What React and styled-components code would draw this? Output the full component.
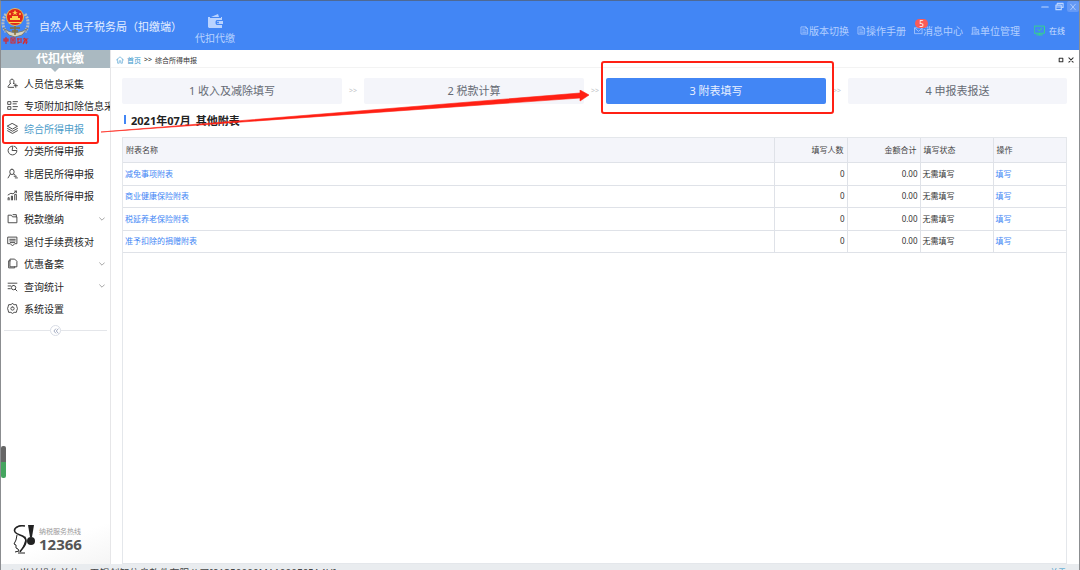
import React, { useState } from 'react';
import styled, { createGlobalStyle, css } from 'styled-components';

const GlobalStyle = createGlobalStyle`
  * {
    box-sizing: border-box;
  }

  body {
    margin: 0;
    overflow: hidden;
    background: #fff;
    color: #333;
    font-family: 'Noto Sans', 'Noto Sans CJK SC', sans-serif;
    font-size: 8px;
  }

  button {
    margin: 0;
    padding: 0;
    border: 0;
    background: none;
    color: inherit;
    font: inherit;
    cursor: pointer;
  }

  a {
    color: inherit;
    text-decoration: none;
  }

  svg {
    display: block;
    flex: none;
  }
`;

const Window = styled.div`
  position: relative;
  display: flex;
  flex-direction: column;
  height: 100vh;
  border: 1px solid #8b8d90;
  border-top-color: #4e6994;
  border-bottom: 0;
`;

const Header = styled.header`
  display: flex;
  flex: none;
  height: 49px;
  background: #4286f5;
  color: #fff;
`;

const Brand = styled.div`
  display: flex;
  align-items: center;
  gap: 9px;
  color: #e4eeff;
  font-size: 11px;
  white-space: nowrap;
`;

const ModuleButton = styled.button`
  display: flex;
  flex-direction: column;
  align-items: center;
  justify-content: center;
  gap: 3px;
  margin-left: 13px;
  padding-top: 8px;
  color: #b9d3ff;
  font-size: 10px;
  line-height: 14px;
`;

const HeaderRight = styled.div`
  display: flex;
  flex-direction: column;
  align-items: flex-end;
  margin-left: auto;
`;

const WindowControls = styled.div`
  display: flex;
  gap: 2px;
  color: #bdd6ff;
`;

const WindowButton = styled.button`
  display: grid;
  place-items: center;
  width: 12px;
  height: 11px;
  border-radius: 2px;
  background: ${props => (props.$filled ? '#6499f5' : 'none')};
`;

const Utilities = styled.nav`
  display: flex;
  align-items: center;
  gap: 8px;
  height: 36px;
  padding-right: 14px;
`;

const UtilityLink = styled.a`
  position: relative;
  display: flex;
  align-items: center;
  color: #b3cfff;
  font-size: 10px;
  white-space: nowrap;
`;

const Badge = styled.span`
  position: absolute;
  top: -4px;
  left: 1px;
  width: 13px;
  height: 9px;
  border-radius: 5px;
  background: #fb5b57;
  color: #fff;
  font-size: 8px;
  line-height: 9px;
  text-align: center;
`;

const Online = styled.span`
  display: flex;
  align-items: center;
  gap: 4px;
  margin-left: 6px;
  color: #cfe0ff;
  font-size: 8px;
`;

const Body = styled.div`
  display: flex;
  flex: 1;
  min-height: 0;
`;

const Sidebar = styled.aside`
  position: relative;
  display: flex;
  flex: none;
  flex-direction: column;
  width: 110px;
  border-right: 1px solid #e6e6e8;
`;

const SidebarTitle = styled.h2`
  position: relative;
  margin: 0 0 4px;
  padding-left: 9px;
  background: #aab9c1;
  color: #fff;
  font-size: 12px;
  line-height: 18px;
  text-align: center;

  &::after {
    content: '';
    position: absolute;
    top: 100%;
    left: 46%;
    border: 4px solid transparent;
    border-top-color: #aab9c1;
    border-bottom: 0;
  }
`;

const Menu = styled.nav`
  display: grid;
  grid-auto-rows: 1fr;
  height: 248px;
`;

const marked = css`
  &::after {
    content: '';
    position: absolute;
    z-index: 2;
    border: 2px solid #ff2014;
    border-radius: 3px;
    pointer-events: none;
  }
`;

const MenuItem = styled.a`
  position: relative;
  display: flex;
  align-items: center;
  gap: 6px;
  min-width: 0;
  padding: 0 5px 0 6px;
  color: ${props => (props.$active ? '#4b9cc9' : '#262626')};
  font-size: 10px;
  white-space: nowrap;

  > span {
    flex: 1;
  }

  ${props => props.$active && marked}

  &::after {
    inset: -3px 11px -4px 1px;
  }
`;

const MenuText = styled.span`
  overflow: hidden;
  margin-right: ${props => (props.$wide ? '-5px' : '0')};
`;

const Collapse = styled.div`
  display: flex;
  align-items: center;
  margin: 5px 3px 0;

  &::before,
  &::after {
    content: '';
    flex: 1;
    border-top: 1px solid #e4e6ea;
  }

  button {
    display: grid;
    place-items: center;
    width: 11px;
    height: 11px;
    border: 1px solid #d9dde6;
    border-radius: 50%;
    color: #8792ad;
  }
`;

const SpeedBar = styled.div`
  position: absolute;
  bottom: 86px;
  left: 0;
  width: 5px;
  height: 32px;
  border-radius: 2px;
  background: linear-gradient(#666 50%, #45a55f 50%);
`;

const Hotline = styled.div`
  position: relative;
  display: flex;
  align-items: center;
  gap: 3px;
  height: 54px;
  margin-top: auto;
  padding: 4px 0 0 12px;
  background: linear-gradient(160deg, #fff 55%, #f5f5f5);
`;

const HotlineText = styled.div`
  color: #999;
  font-size: 7px;
  line-height: 10px;

  strong {
    display: block;
    color: #555;
    font-size: 15px;
    line-height: 15px;
  }
`;

const Main = styled.main`
  display: flex;
  flex: 1;
  flex-direction: column;
  min-width: 0;
`;

const Breadcrumb = styled.div`
  display: flex;
  align-items: center;
  gap: 3px;
  height: 18px;
  padding: 2px 5px 0;
  border-bottom: 1px solid #f3f3f3;
  font-size: 7px;

  a {
    color: #3495cb;
  }
`;

const TabControls = styled.div`
  display: flex;
  gap: 4px;
  margin-left: auto;
`;

const Page = styled.section`
  display: flex;
  flex: 1;
  flex-direction: column;
  min-height: 0;
  padding: 10px 12px 0 11px;
`;

const Steps = styled.ol`
  display: flex;
  margin: 0;
  padding: 0;
  list-style: none;
`;

const Step = styled.li`
  display: flex;
  flex: 1;

  &:not(:last-child)::after {
    content: '>>';
    width: 22px;
    color: #c4c6ca;
    font-size: 7px;
    line-height: 26px;
    text-align: center;
  }

  &:last-child {
    flex: 0 0 219px;
  }
`;

const StepButton = styled.button`
  position: relative;
  flex: 1;
  height: 26px;
  padding-bottom: 2px;
  border-radius: 2px;
  background: ${props => (props.$active ? '#4286f5' : '#f4f5fa')};
  color: ${props => (props.$active ? '#e8f0ff' : '#666b75')};
  font-size: 11px;

  ${props => props.$active && marked}

  &::after {
    inset: -17px -8px -10px -5px;
  }
`;

const Title = styled.h1`
  display: flex;
  gap: 5px;
  margin: 8px 0;
  padding-left: 2px;
  color: #222;
  font-size: 11px;
  line-height: 17px;

  &::before {
    content: '';
    width: 2px;
    height: 9px;
    margin-top: 3px;
    background: #4286f5;
  }
`;

const TablePanel = styled.div`
  flex: 1;
  min-height: 0;
  border: 1px solid #e4e7eb;
`;

const Table = styled.table`
  width: 100%;
  border-collapse: collapse;
  table-layout: fixed;
  line-height: 12px;

  th,
  td {
    padding: 0 2px;
    border-right: 1px solid #dfe2e8;
    border-bottom: 1px solid #dfe2e8;
    text-align: left;
  }

  th:last-child,
  td:last-child {
    border-right: 0;
  }

  th {
    height: 24px;
    padding: 0 3px;
    background: #f4f5fa;
    color: #444;
    font-weight: 400;
  }

  td {
    height: 23px;
  }

  tr:nth-child(even) td {
    height: 22px;
  }

  th:nth-child(2),
  th:nth-child(3),
  td:nth-child(2),
  td:nth-child(3) {
    text-align: right;
  }

  a {
    color: #4286f5;
  }
`;

const NameCol = styled.col``;

const DataCol = styled.col`
  width: 73px;
`;

const StatusBar = styled.footer`
  display: flex;
  flex: none;
  justify-content: space-between;
  overflow: hidden;
  height: 6px;
  padding: 2px 13px 0 7px;
  background: #e9ecef;
  color: #444;
  font-size: 10px;
  line-height: 14px;
  white-space: nowrap;

  a {
    color: #3495cb;
    font-size: 8px;
    line-height: 12px;
  }
`;

const Arrow = styled.svg`
  position: absolute;
  z-index: 3;
  top: 89px;
  left: 100px;
  width: calc(50% - 50px);
  height: 44px;
  pointer-events: none;
`;

const Icon = ({ size = 10, children, ...rest }) => (
  <svg
    width={size}
    height={size}
    viewBox="0 0 20 20"
    fill="none"
    stroke="currentColor"
    strokeWidth="1.7"
    strokeLinecap="round"
    strokeLinejoin="round"
    aria-hidden="true"
    {...rest}
  >
    {children}
  </svg>
);

const icons = {
  person: <path d="M6 10C4 6 6 2 9 2s5 4 3 8M6 10l-4 5v2h10M12 10l2 1M16 11v6M13 14h6" />,
  list: <path d="M2 3h5v5H2zM2 12h5v5H2zM11 3h8M11 7h6M11 12h8M11 17h6" />,
  layers: <path d="M10 1l9 5-9 5-9-5zM1 10l9 5 9-5M1 14l9 5 9-5" />,
  pie: <path d="M10 2a8 8 0 1 0 8 8h-8zM13 2a7 7 0 0 1 5 5" />,
  user: <path d="M9 2a4 5 0 1 1 0 10 4 5 0 0 1 0-10M6 11l-4 7M12 11l3 2M13 15h4M15 18h4" />,
  chart: <path d="M2 18v-4h2v4M8 18v-7h2v7M14 18V8h3v10M2 9l5-3 4 1 6-5M14 2h3v3" />,
  folder: <path d="M2 17V4h6l2 3h8v10zM11 3h6v4" />,
  receipt: <path d="M2 2h16v12h-4l-4 4-4-4H2zM5 6h10M5 9h10M6 12h8" />,
  copy: <path d="M6 2h8l4 4v10H6zM6 5H3v13h11v-2" />,
  search: <path d="M2 4h16M2 9h5M2 14h4M12 8a4 4 0 1 1 0 8 4 4 0 0 1 0-8M15 15l3 3" />,
  gear: <path d="M10 1l3 2h4l1 4 1 3-1 3-1 4h-4l-3 2-3-2H3l-1-4-1-3 1-3 1-4h4zM10 7a3 3 0 1 1 0 6 3 3 0 0 1 0-6" />,
  doc: <path d="M3 2h10l4 4v12H3zM13 2v4h4M6 7h4M6 11h8M6 15h8" />,
  mail: <path d="M2 4h16v13H2zM2 5l8 7 8-7" />,
  building: <path d="M1 18h18M3 18V3h8v15M11 8h6v10M6 7h2M6 11h2M6 15h2M14 12v3" />,
};

const menuItems = [
  { icon: 'person', label: '人员信息采集' },
  { icon: 'list', label: '专项附加扣除信息采集', wide: true },
  { icon: 'layers', label: '综合所得申报' },
  { icon: 'pie', label: '分类所得申报' },
  { icon: 'user', label: '非居民所得申报' },
  { icon: 'chart', label: '限售股所得申报' },
  { icon: 'folder', label: '税款缴纳', children: true },
  { icon: 'receipt', label: '退付手续费核对' },
  { icon: 'copy', label: '优惠备案', children: true },
  { icon: 'search', label: '查询统计', children: true },
  { icon: 'gear', label: '系统设置' },
];

const utilities = [
  { icon: 'doc', label: '版本切换' },
  { icon: 'doc', label: '操作手册' },
  { icon: 'mail', label: '消息中心', count: 5 },
  { icon: 'building', label: '单位管理' },
];

const steps = ['收入及减除填写', '税款计算', '附表填写', '申报表报送'];

const rows = ['减免事项附表', '商业健康保险附表', '税延养老保险附表', '准予扣除的捐赠附表'].map(name => ({
  name,
  people: 0,
  amount: '0.00',
  status: '无需填写',
}));

const Emblem = () => (
  <svg width="29" height="38" viewBox="0 0 29 38" role="img" aria-label="中国税务">
    <path d="M5 7C1 12 1 20 5 25M24 7c4 5 4 13 0 18" fill="none" stroke="#b9bec3" strokeWidth="3" strokeDasharray="2 1" />
    <path d="M2 21l6 7 6 2 7-2 6-7-5 3-8 2-7-2z" fill="#d9d4bf" stroke="#777c7c" strokeWidth="1" />
    <circle cx="14" cy="10" r="9" fill="#e6ba55" />
    <circle cx="14" cy="10" r="8" fill="#df2818" />
    <path d="M14 3l1 2h2l-2 1 1 2-2-1-2 1 1-2-2-1h2zM9 13v-2h2V9h6v2h2v2zM8 15h12v1H8z" fill="#ffd34b" />
    <circle cx="9" cy="7" r="1" fill="#ffd34b" />
    <circle cx="19" cy="7" r="1" fill="#ffd34b" />
    <path d="M9 21h10M11 24h6M14 19v9" stroke="#8b6f30" strokeWidth="1.4" />
    <path
      d="M3 32h4v2H3zM5 30v7M10 31h4v5h-4zM11 33h2M12 32v3M16 32h3M17 31v5l2-1M20 31v5M22 32h4l-3 2M23 31l3 3M22 35h4l-1 2M24 34l-2 3"
      fill="none"
      stroke="#dc2727"
      strokeWidth="1.1"
    />
  </svg>
);

const HotlineLogo = () => (
  <svg width="23" height="30" viewBox="0 0 23 30" fill="none" aria-hidden="true">
    <path d="M12 2C5 1 0 4 2 8c2 4 11 2 11 9 0 5-4 7-6 11" stroke="#222" strokeWidth="1.6" />
    <path d="M12 1C6 1 2 3 2 6c1-2 4-4 10-5zM12 12c3 4 1 9-3 13 2-5 4-9 3-13z" fill="#222" />
    <path d="M4 11l-1 5-2 4 2 1v3l2 1 1 2-4 1M5 29h7" stroke="#222" strokeWidth="1" />
    <path d="M15 1h6l-2 12h-2z" fill="#222" />
    <circle cx="18" cy="17" r="4" fill="#222" />
  </svg>
);

const App = () => {
  const [activeMenu, setActiveMenu] = useState(2);
  const [activeStep, setActiveStep] = useState(2);

  return (
    <>
      <GlobalStyle />
      <Window>
        <Header>
          <Brand>
            <Emblem />
            <span>自然人电子税务局（扣缴端）</span>
          </Brand>
          <ModuleButton type="button">
            <svg width="15" height="14" viewBox="0 0 15 14" fill="#b9d3ff" aria-hidden="true">
              <path d="M0 3h2v1h11V3h1v3H9C7 6 7 11 9 11h5v3H1L0 13z" />
              <path d="M3 3l7-3 1 3M9 7h6v3H9z" />
              <circle cx="10" cy="8.5" r="1" fill="#4286f5" />
            </svg>
            代扣代缴
          </ModuleButton>
          <HeaderRight>
            <WindowControls>
              <WindowButton type="button" aria-label="最小化">
                <Icon size={8}><path d="M2 10h16" strokeWidth="3" /></Icon>
              </WindowButton>
              <WindowButton type="button" aria-label="还原">
                <Icon size={9}><path d="M2 7h12v10H2zM5 7V3h13v9h-3M3 11h10" strokeWidth="2.4" /></Icon>
              </WindowButton>
              <WindowButton type="button" aria-label="关闭" $filled>
                <Icon size={8}><path d="M4 3l12 14M16 3L4 17" strokeWidth="2" /></Icon>
              </WindowButton>
            </WindowControls>
            <Utilities>
              {utilities.map(item => (
                <UtilityLink key={item.label} href="#">
                  <Icon size={9}>{icons[item.icon]}</Icon>
                  {item.label}
                  {item.count && <Badge>{item.count}</Badge>}
                </UtilityLink>
              ))}
              <Online>
                <Icon size={11} stroke="#36d982"><path d="M1 2h18v13H1zM10 15v3M5 18h10M7 8l3 3 4-5" /></Icon>
                在线
              </Online>
            </Utilities>
          </HeaderRight>
        </Header>

        <Body>
          <Sidebar>
            <SidebarTitle>代扣代缴</SidebarTitle>
            <Menu>
              {menuItems.map((item, index) => (
                <MenuItem
                  key={item.label}
                  href="#"
                  $active={index === activeMenu}
                  onClick={() => setActiveMenu(index)}
                >
                  <Icon size={11} stroke="#444">{icons[item.icon]}</Icon>
                  <MenuText $wide={item.wide}>{item.label}</MenuText>
                  {item.children && <Icon size={6} stroke="#888"><path d="M2 6l8 8 8-8" strokeWidth="2.5" /></Icon>}
                </MenuItem>
              ))}
            </Menu>
            <Collapse>
              <button type="button" aria-label="收起菜单">
                <Icon size={6}><path d="M9 3l-6 7 6 7M17 3l-6 7 6 7" strokeWidth="2.5" /></Icon>
              </button>
            </Collapse>
            <SpeedBar />
            <Hotline>
              <HotlineLogo />
              <HotlineText>
                纳税服务热线
                <strong>12366</strong>
              </HotlineText>
            </Hotline>
          </Sidebar>

          <Main>
            <Breadcrumb>
              <Icon size={8} stroke="#62a9d6"><path d="M1 10l9-8 9 8M4 8v10h4v-6h4v6h4V8" /></Icon>
              <a href="#">首页</a>
              <span>&gt;&gt;</span>
              <span>综合所得申报</span>
              <TabControls>
                <button type="button" aria-label="最大化">
                  <Icon size={6}><path d="M4 4h12v12H4z" strokeWidth="3.5" /></Icon>
                </button>
                <button type="button" aria-label="关闭标签">
                  <Icon size={6}><path d="M3 3l14 14M17 3L3 17" strokeWidth="3.5" /></Icon>
                </button>
              </TabControls>
            </Breadcrumb>
            <Page>
              <Steps>
                {steps.map((label, index) => (
                  <Step key={label}>
                    <StepButton type="button" $active={index === activeStep} onClick={() => setActiveStep(index)}>
                      {index + 1} {label}
                    </StepButton>
                  </Step>
                ))}
              </Steps>
              <Title>
                <span>2021年07月</span>
                <span>其他附表</span>
              </Title>
              <TablePanel>
                <Table>
                  <colgroup>
                    <NameCol />
                    <DataCol />
                    <DataCol />
                    <DataCol />
                    <DataCol />
                  </colgroup>
                  <thead>
                    <tr>
                      <th>附表名称</th>
                      <th>填写人数</th>
                      <th>金额合计</th>
                      <th>填写状态</th>
                      <th>操作</th>
                    </tr>
                  </thead>
                  <tbody>
                    {rows.map(row => (
                      <tr key={row.name}>
                        <td><a href="#">{row.name}</a></td>
                        <td>{row.people}</td>
                        <td>{row.amount}</td>
                        <td>{row.status}</td>
                        <td><a href="#">填写</a></td>
                      </tr>
                    ))}
                  </tbody>
                </Table>
              </TablePanel>
            </Page>
          </Main>
        </Body>

        <StatusBar>
          <span>♟ 当前操作单位：无锡创智信息软件有限公司[91350000MA1000F65A4U]</span>
          <a href="#">关于</a>
        </StatusBar>

        <Arrow viewBox="0 0 490 44" preserveAspectRatio="none" aria-hidden="true">
          <path d="M0 42L480 3V0l9 5-9 6V8L0 42z" fill="#ff2014" stroke="#ff2014" strokeWidth="0.6" />
        </Arrow>
      </Window>
    </>
  );
};

export default App;
